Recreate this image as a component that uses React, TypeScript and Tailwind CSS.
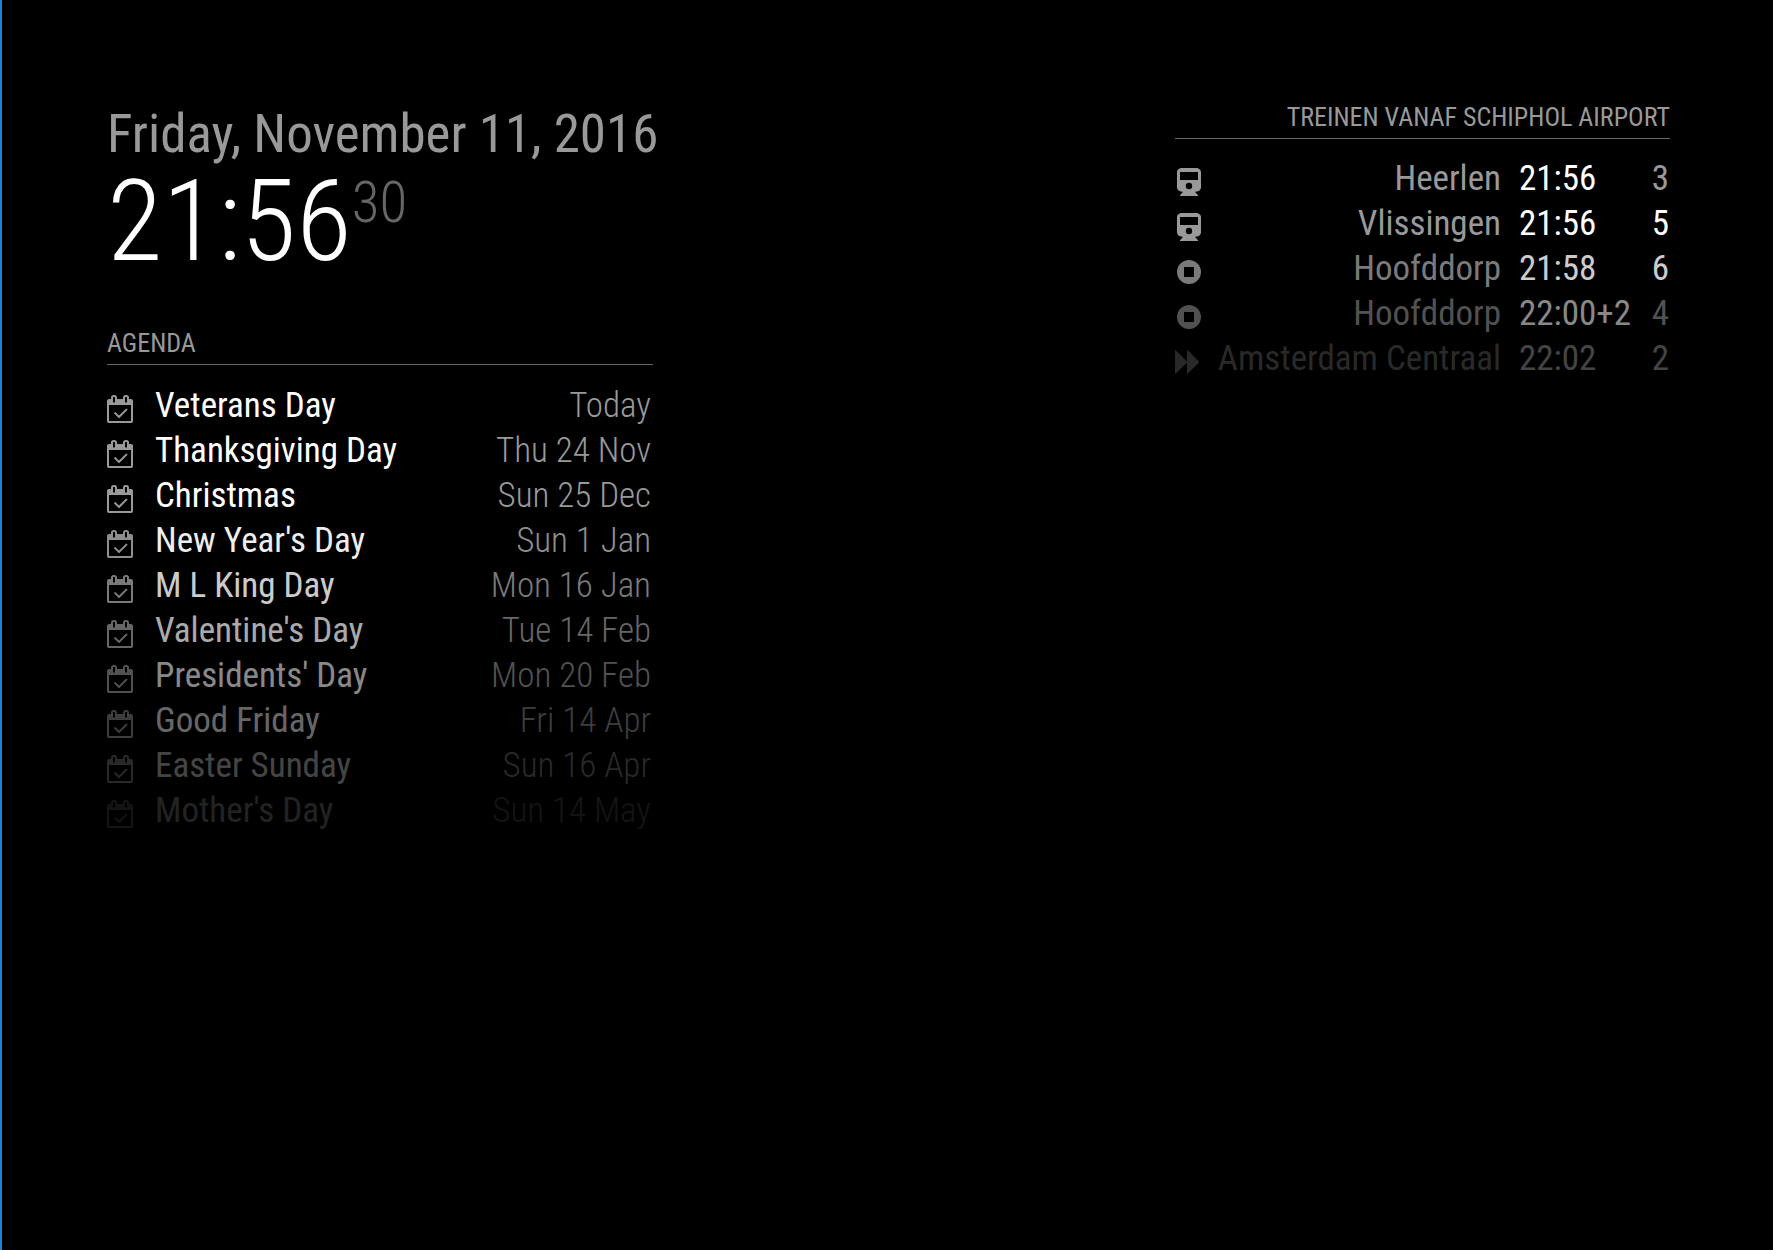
type AgendaItem = { title: string; when: string };
type Train = {
  icon: "train" | "stop" | "forward";
  destination: string;
  time: string;
  track: string;
  changed: boolean;
};

const agenda: AgendaItem[] = [
  { title: "Veterans Day", when: "Today" },
  { title: "Thanksgiving Day", when: "Thu 24 Nov" },
  { title: "Christmas", when: "Sun 25 Dec" },
  { title: "New Year's Day", when: "Sun 1 Jan" },
  { title: "M L King Day", when: "Mon 16 Jan" },
  { title: "Valentine's Day", when: "Tue 14 Feb" },
  { title: "Presidents' Day", when: "Mon 20 Feb" },
  { title: "Good Friday", when: "Fri 14 Apr" },
  { title: "Easter Sunday", when: "Sun 16 Apr" },
  { title: "Mother's Day", when: "Sun 14 May" },
];

const trains: Train[] = [
  { icon: "train", destination: "Heerlen", time: "21:56", track: "3", changed: false },
  { icon: "train", destination: "Vlissingen", time: "21:56", track: "5", changed: true },
  { icon: "stop", destination: "Hoofddorp", time: "21:58", track: "6", changed: true },
  { icon: "stop", destination: "Hoofddorp", time: "22:00+2", track: "4", changed: false },
  { icon: "forward", destination: "Amsterdam Centraal", time: "22:02", track: "2", changed: true },
];

// Rows fade out linearly after the first quarter of the list.
function fade(index: number, count: number) {
  const start = count * 0.25;
  return index <= start ? undefined : 1 - (index - start) / (count - start);
}

function CalendarIcon() {
  return (
    <svg viewBox="0 0 1664 1792" className="h-7 w-[26px] fill-current" aria-hidden="true">
      <path d="M1303 964l-512 512q-10 9-23 9t-23-9l-288-288q-9-10-9-23t9-22l46-46q9-9 22-9t23 9l220 220 444-444q10-9 23-9t22 9l46 46q9 9 9 22t-9 23zm-1175 700h1408v-1024h-1408v1024zm384-1216v-288q0-14-9-23t-23-9h-64q-14 0-23 9t-9 23v288q0 14 9 23t23 9h64q14 0 23-9t9-23zm768 0v-288q0-14-9-23t-23-9h-64q-14 0-23 9t-9 23v288q0 14 9 23t23 9h64q14 0 23-9t9-23zm384-64v1280q0 52-38 90t-90 38h-1408q-52 0-90-38t-38-90v-1280q0-52 38-90t90-38h128v-96q0-66 47-113t113-47h64q66 0 113 47t47 113v96h384v-96q0-66 47-113t113-47h64q66 0 113 47t47 113v96h128q52 0 90 38t38 90z" />
    </svg>
  );
}

function TrainIcon({ kind }: { kind: Train["icon"] }) {
  if (kind === "train") {
    return (
      <svg viewBox="0 0 24 28" className="ml-[2px] h-7 w-6 fill-current" fillRule="evenodd" aria-hidden="true">
        <path d="M5 0H19C21.8 0 24 1.8 24 4V19.5C24 21.8 21.8 23.6 19 23.7L17.9 23.8L21 27.3C21.2 27.6 21 28 20.6 28H3.4C3 28 2.8 27.6 3 27.3L6.1 23.8L5 23.7C2.2 23.6 0 21.8 0 19.5V4C0 1.8 2.2 0 5 0ZM3 4V12H21V4ZM12 14.8A3.2 3.2 0 1 0 12 21.2A3.2 3.2 0 1 0 12 14.8Z" />
      </svg>
    );
  }
  if (kind === "stop") {
    return (
      <svg viewBox="0 0 24 28" className="ml-[2px] h-7 w-6 fill-current" fillRule="evenodd" aria-hidden="true">
        <path d="M12 2A12 12 0 1 1 12 26A12 12 0 1 1 12 2ZM7.4 9H16.6Q17 9 17 9.4V18.6Q17 19 16.6 19H7.4Q7 19 7 18.6V9.4Q7 9 7.4 9Z" />
      </svg>
    );
  }
  return (
    <svg viewBox="0 0 24 28" className="h-7 w-6 fill-current" aria-hidden="true">
      <path d="M0 2.5C0 2 .4 1.9 .7 2.2L12 13.5V2.5C12 2 12.4 1.9 12.7 2.2L23.8 13.3Q24.3 14 23.8 14.7L12.7 25.8C12.4 26.1 12 26 12 25.5V14.5L.7 25.8C.4 26.1 0 26 0 25.5Z" />
    </svg>
  );
}

export default function App() {
  return (
    <main className="flex min-h-screen items-start justify-between border-l-2 border-[#1883d7] bg-black pt-[103px] pr-[103px] pl-[105px] font-['Roboto_Condensed','Roboto',sans-serif] text-[35px] leading-[45px] text-[#999]">
      <div className="w-[546px]">
        <section>
          <div className="text-[53px] leading-[62px] whitespace-nowrap">Friday, November 11, 2016</div>
          <div className="flex items-start text-[114px] leading-[112px] font-light text-white">
            <span>21:56</span>
            <span className="text-[57px] leading-[75px] text-[#666]">30</span>
          </div>
        </section>
        <section className="mt-[52px]">
          <h2 className="border-b border-[#666] pt-px pb-2 text-[26px] leading-[26px] uppercase">Agenda</h2>
          <table className="mt-[18px] w-full border-collapse">
            <tbody>
              {agenda.map((item, i) => (
                <tr key={item.title} style={{ opacity: fade(i, agenda.length) }}>
                  <td className="w-12 p-0 pt-3 align-top">
                    <CalendarIcon />
                  </td>
                  <td className="p-0 text-left align-top text-white">{item.title}</td>
                  <td className="p-0 pr-[2px] text-right align-top font-light">{item.when}</td>
                </tr>
              ))}
            </tbody>
          </table>
        </section>
      </div>
      <section className="w-[495px]">
        <h2 className="border-b border-[#666] pt-px pb-2 text-right text-[26px] leading-[26px] whitespace-nowrap uppercase">
          Treinen vanaf Schiphol Airport
        </h2>
        <table className="mt-[17px] w-full border-collapse">
          <tbody>
            {trains.map((train, i) => (
              <tr key={i} style={{ opacity: fade(i, trains.length) }}>
                <td className="p-0 pt-3 align-top">
                  <TrainIcon kind={train.icon} />
                </td>
                <td className="p-0 text-right align-top whitespace-nowrap">{train.destination}</td>
                <td className="w-[131px] p-0 pl-[18px] text-left align-top whitespace-nowrap text-white">
                  {train.time}
                </td>
                <td
                  className={
                    train.changed
                      ? "w-[38px] p-0 pr-px text-right align-top text-white"
                      : "w-[38px] p-0 pr-px text-right align-top"
                  }
                >
                  {train.track}
                </td>
              </tr>
            ))}
          </tbody>
        </table>
      </section>
    </main>
  );
}
